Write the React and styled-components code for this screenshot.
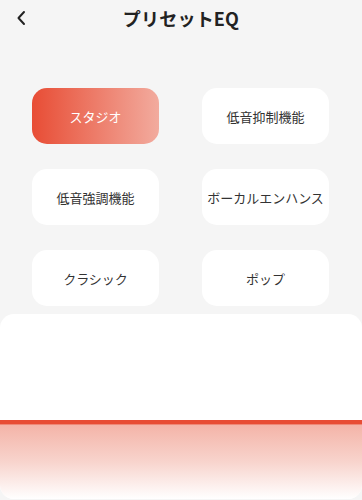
import React, { useState } from "react";
import styled, { createGlobalStyle } from "styled-components";

const GlobalStyle = createGlobalStyle`
  html, body {
    margin: 0;
    padding: 0;
    background: #f5f5f5;
  }
  body {
    font-family: "Noto Sans CJK JP", "Noto Sans", sans-serif;
  }
`;

const Page = styled.div`
  width: 362px;
  height: 500px;
  display: flex;
  flex-direction: column;
  background: #f5f5f5;
  overflow: hidden;
`;

const Header = styled.div`
  height: 35px;
  display: grid;
  grid-template-columns: 44px 1fr 44px;
  align-items: center;
`;

const BackButton = styled.button`
  border: none;
  background: none;
  padding: 0 0 0 16px;
  display: flex;
  align-items: center;
  cursor: pointer;
`;

const Title = styled.h1`
  margin: 0;
  text-align: center;
  font-size: 18px;
  font-weight: 700;
  color: #222;
  letter-spacing: 0.2px;
`;

const PresetGrid = styled.div`
  margin-top: 53px;
  padding: 0 33px 0 32px;
  display: grid;
  grid-template-columns: 127px 127px;
  justify-content: space-between;
  row-gap: 25px;
`;

const PresetButton = styled.button`
  height: 56px;
  border: none;
  border-radius: 15px;
  font-family: inherit;
  font-size: 13px;
  white-space: nowrap;
  padding: 0;
  cursor: pointer;
  color: ${(props) => (props.$active ? "#fff" : "#333")};
  background: ${(props) =>
    props.$active
      ? "linear-gradient(90deg, #e84d35 0%, #f2ab9e 100%)"
      : "#fff"};
`;

const Panel = styled.div`
  margin-top: 8px;
  height: 185px;
  display: flex;
  flex-direction: column;
  background: #fff;
  border-radius: 14px;
  overflow: hidden;
`;

const PanelBody = styled.div`
  height: 106px;
`;

const Level = styled.div`
  height: 4px;
  background: #e84d35;
  border-bottom: 1px solid #ee8877;
`;

const Fill = styled.div`
  flex: 1;
  background: linear-gradient(180deg, #f4b4a8 0%, #f8d4cd 50%, #ffffff 100%);
`;

const presets = [
  "スタジオ",
  "低音抑制機能",
  "低音強調機能",
  "ボーカルエンハンス",
  "クラシック",
  "ポップ",
];

export default function App() {
  const [active, setActive] = useState(0);

  return (
    <>
      <GlobalStyle />
      <Page>
        <Header>
          <BackButton aria-label="戻る">
            <svg width="10" height="16" viewBox="0 0 10 16">
              <path
                d="M8 2 L2.5 8 L8 14"
                fill="none"
                stroke="#222"
                strokeWidth="2"
                strokeLinecap="round"
                strokeLinejoin="round"
              />
            </svg>
          </BackButton>
          <Title>プリセットEQ</Title>
          <span />
        </Header>
        <PresetGrid>
          {presets.map((name, i) => (
            <PresetButton
              key={name}
              $active={i === active}
              onClick={() => setActive(i)}
            >
              {name}
            </PresetButton>
          ))}
        </PresetGrid>
        <Panel>
          <PanelBody />
          <Level />
          <Fill />
        </Panel>
      </Page>
    </>
  );
}
